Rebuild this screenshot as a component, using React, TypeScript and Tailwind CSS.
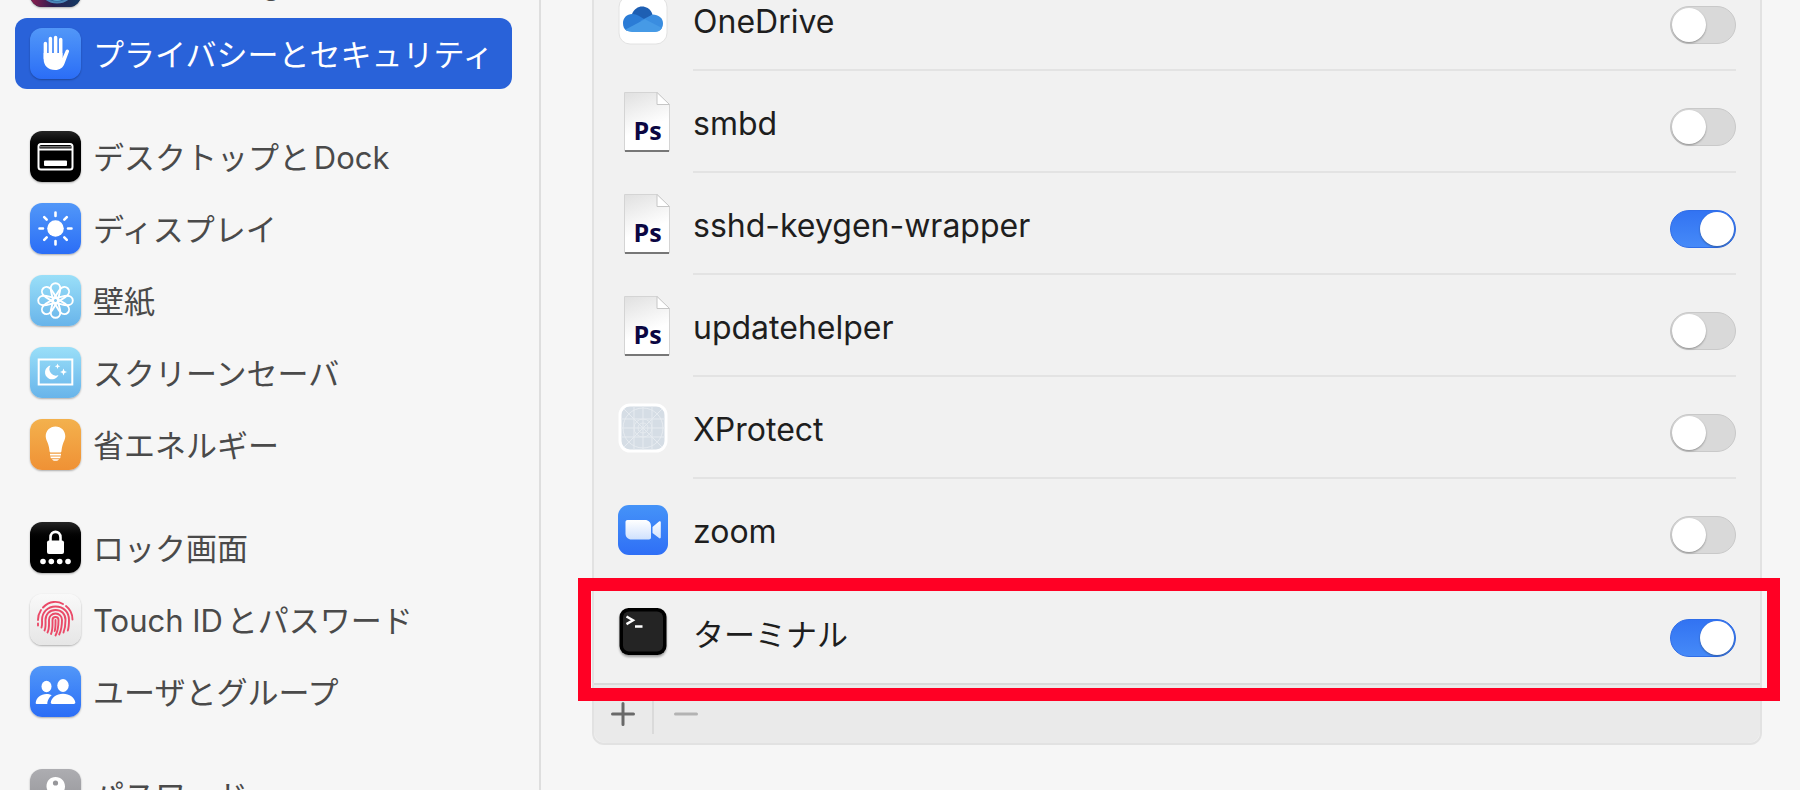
import type { ReactNode } from 'react';

type NavItem = { label: string; tile: string; icon: ReactNode; active?: boolean };
type AppItem = { name: string; on: boolean; icon: ReactNode; textSize?: string; marked?: boolean };

const blue = 'bg-linear-to-b from-[#5297f8] to-[#2b6df6]';
const sky = 'bg-linear-to-b from-[#9adff8] to-[#68b4ea]';
const black = 'bg-linear-to-b from-[#262626] to-black to-40%';

const SiriIcon = () => (
  <svg viewBox="0 0 51 51" className="size-full">
    <defs>
      <linearGradient id="siri" x1="0" x2="1">
        <stop offset="0" stopColor="#8f1d4d" />
        <stop offset=".45" stopColor="#2b1f52" />
        <stop offset="1" stopColor="#123a63" />
      </linearGradient>
    </defs>
    <rect width="51" height="51" rx="12" fill="url(#siri)" />
    <circle cx="27" cy="28" r="18.500" fill="#2d5f95" stroke="#4a86b8" strokeWidth="2" />
    <circle cx="27" cy="33" r="12" fill="#56a8d0" />
  </svg>
);

const HandIcon = () => (
  <svg viewBox="0 0 51 51" className="size-full" fill="none" stroke="#fff" strokeLinecap="round">
    <path d="M15.400 15.500v15M20.400 10.500v16M25.600 9.500v17M30.700 11.500v17" strokeWidth="3.500" />
    <path d="M13.650 25h18.800v5l3.300-7.500c.9-2 4-1 3.200 1.300l-4.400 11.700c-1.500 4.200-4.700 6.500-9.400 6.500-7 0-11.500-4.300-11.500-11z" fill="#fff" stroke="none" />
  </svg>
);

const DockIcon = () => (
  <svg viewBox="0 0 51 51" className="size-full" fill="none">
    <rect x="8.500" y="13" width="34" height="25.500" rx="2.500" stroke="#fff" strokeWidth="2" />
    <path d="M9 18.500h33" stroke="#fff" strokeWidth="1.800" />
    <path d="M10 15.800h31" stroke="#777" strokeWidth="1.500" />
    <rect x="14" y="29.500" width="23" height="5.500" rx="1" fill="#fff" />
  </svg>
);

const SunIcon = () => (
  <svg viewBox="0 0 51 51" className="size-full">
    <circle cx="25.500" cy="25.500" r="8.300" fill="#fff" />
    <path d="M25.500 9.500v3.500M25.500 38v3.500M9.500 25.500H13M38 25.500h3.500M14.200 14.200l2.500 2.500M34.300 34.300l2.500 2.500M14.200 36.800l2.500-2.500M34.300 16.700l2.500-2.500" stroke="#fff" strokeWidth="2.600" strokeLinecap="round" />
  </svg>
);

const FlowerIcon = () => (
  <svg viewBox="0 0 51 51" className="size-full" fill="none" stroke="#fff" strokeWidth="1.900">
    {[0, 45, 90, 135, 180, 225, 270, 315].map((angle) => (
      <path
        key={angle}
        d="M23 27.500c.5-4.500-2.300-9-2.300-14a4.800 5.300 0 0 1 9.600 0c0 5-2.800 9.500-2.300 14"
        transform={`rotate(${angle} 25.500 25.500)`}
      />
    ))}
  </svg>
);

const ScreenSaverIcon = () => (
  <svg viewBox="0 0 51 51" className="size-full" fill="#fff">
    <rect x="8.700" y="12.500" width="33.600" height="25" fill="none" stroke="#fff" strokeWidth="2" />
    <path d="M20.500 18.500a7 7 0 1 0 8 9.500 6.500 6.500 0 0 1-8-9.500z" />
    <path d="M27.500 16.500l.8 2 2 .8-2 .8-.8 2-.8-2-2-.8 2-.8zM33.500 21.500l1 2.500 2.500 1-2.500 1-1 2.500-1-2.500-2.500-1 2.500-1z" />
  </svg>
);

const BulbIcon = () => (
  <svg viewBox="0 0 51 51" className="size-full" fill="#fff">
    <path d="M25.500 7.500c-5.700 0-9.800 4.300-9.800 9.800 0 3 1.500 5 2.400 7.700.9 2.700 1.200 5 1.500 7.500.1.700.5 1 1.100 1h9.600c.6 0 1-.3 1.100-1 .3-2.500.6-4.800 1.500-7.500.9-2.700 2.400-4.700 2.400-7.700 0-5.500-4.100-9.800-9.800-9.800z" />
    <path d="M20 34.700h11v1.800H20zM20.300 37.500h10.400l-.6 1.700h-9.200zM22 40.200h7c-.6 1-1.800 1.500-3.500 1.500S22.600 41.200 22 40.200z" />
  </svg>
);

const LockIcon = () => (
  <svg viewBox="0 0 51 51" className="size-full" fill="#fff">
    <path d="M20.500 20v-4.500c0-7.500 10-7.500 10 0V20" fill="none" stroke="#fff" strokeWidth="2.600" />
    <rect x="17" y="18.500" width="17" height="13.500" rx="2" />
    <circle cx="13" cy="39.500" r="2.800" />
    <circle cx="21.300" cy="39.500" r="2.800" />
    <circle cx="29.700" cy="39.500" r="2.800" />
    <circle cx="38" cy="39.500" r="2.800" />
  </svg>
);

const FingerprintIcon = () => (
  <svg viewBox="0 0 51 51" className="size-full" fill="none" stroke="#ea4a68" strokeWidth="1.900" strokeLinecap="round">
    <path d="M13 13.500C19.500 6.500 28 7 33 10M36 12c4.500 3.500 6.500 8.500 6.500 13.500M8 26c0-4 1-7 3-10M8 29.500v2" />
    <path d="M11.500 33.500c1-2.500.5-5 .5-7.500 0-7.500 5.500-13.500 13.500-13.500S39 18 39 26c0 4 0 7-1.200 10.500" />
    <path d="M14.500 36.500c1.500-3 1-7 1-10.500 0-5.500 4-10 10-10s10 4 10 10c0 4.500-.5 8.500-2 12.500" />
    <path d="M17.500 38.500c2-3.500 1.500-8.500 1.500-12.500 0-3.500 2.800-6.500 6.500-6.500s6.500 3 6.500 6.500c0 5-.7 10-2.800 14.500" />
    <path d="M21 40c2-4.500 1.500-9 1.500-14 0-4 6-4 6 0 0 5 0 10-3 15.500" />
    <path d="M25.500 26c0 4 .2 8-.8 11" />
  </svg>
);

const UsersIcon = () => (
  <svg viewBox="0 0 51 51" className="size-full" fill="#fff">
    <ellipse cx="16.500" cy="20.500" rx="5" ry="5.700" />
    <ellipse cx="33" cy="19.500" rx="5.700" ry="6.400" />
    <path d="M6.500 38c-.6 0-.9-.5-.8-1.200.6-5 5-8.800 10.800-8.800 1.900 0 3.700.5 5.200 1.300-2.400 2-4 4.700-4.400 7.500 0 .5 0 .8.100 1.200z" />
    <path d="M22.500 38c-1.500 0-1.900-.6-1.700-1.700.9-5 5.500-8.600 12.200-8.600s11.500 3.600 12.300 8.600c.1 1.100-.4 1.700-1.700 1.700z" />
  </svg>
);

const KeyIcon = () => (
  <svg viewBox="0 0 51 51" className="size-full">
    <path d="M25.500 8c5.500 0 9.500 4 9.500 9.500 0 4-2.300 7-5.500 8.500v3l3 3-3 3 3 3-5 5-4-4V26c-4-1.500-7-4.500-7-8.500C16.500 12 20 8 25.500 8z" fill="#fff" />
    <circle cx="25.500" cy="14" r="2.600" fill="#97979b" />
  </svg>
);

const OneDriveIcon = () => (
  <svg viewBox="0 0 50 50" className="size-[50px]">
    <rect x="1" y="1" width="48" height="48" rx="11" fill="#fff" stroke="#e2e2e2" />
    <path d="M14 19c2.500-6 8-8.500 13-7 4 1 6.500 4 7.500 7.500L26 27z" fill="#1e5fb3" />
    <path d="M5 28c0-5.500 4.500-9.500 10-9 4 .2 7 2.500 12 5.500L9 36c-3-1.500-4-4.500-4-8z" fill="#2b7cd6" />
    <path d="M22 26l12.500-6.500c6 0 10.500 3.500 10.500 9 0 4.500-3 8-8 8z" fill="#3a8de0" />
    <path d="M7.500 34.500L27 24.200l17 8.800c-1.500 2.500-4 4-7 4H14c-3 0-5-1-6.500-2.500z" fill="#469ae6" />
  </svg>
);

const PsFileIcon = () => (
  <svg viewBox="0 0 46 60" className="ml-1.5 h-15 w-[46px]">
    <defs>
      <linearGradient id="paper" x1="0" y1="0" x2=".3" y2="1">
        <stop offset="0" stopColor="#e0e0e0" />
        <stop offset=".7" stopColor="#fff" />
      </linearGradient>
    </defs>
    <path d="M.5.5H33L45.500 13v46H.5z" fill="url(#paper)" stroke="#d4d4d4" />
    <path d="M33 .5V12.500H45.500z" fill="#fff" stroke="#c6c6c6" />
    <path d="M1 59h44" stroke="#777" strokeWidth="2" />
    <text x="23.500" y="48" textAnchor="middle" fill="#0b0642" fontSize="25" fontWeight="700" fontFamily="Open Sans, sans-serif">Ps</text>
  </svg>
);

const XProtectIcon = () => (
  <svg viewBox="0 0 50 50" className="size-[50px]" fill="none">
    <rect x="2" y="2" width="46" height="46" rx="10" fill="#d5dde5" stroke="#fff" strokeWidth="3" />
    <g stroke="#e6ebf0" strokeWidth="1">
      <path d="M25 3v44M3 25h44M16 3v44M34 3v44M3 16h44M3 34h44M6 6l38 38M44 6L6 44" />
      <circle cx="25" cy="25" r="20" />
      <circle cx="25" cy="25" r="9" />
      <circle cx="25" cy="25" r="5" />
    </g>
  </svg>
);

const ZoomIcon = () => (
  <svg viewBox="0 0 50 50" className="size-[50px]">
    <defs>
      <linearGradient id="zoom" x2="0" y2="1">
        <stop offset="0" stopColor="#4593f8" />
        <stop offset="1" stopColor="#2f6ff6" />
      </linearGradient>
      <linearGradient id="camera" x2="0" y2="1">
        <stop offset="0" stopColor="#fff" />
        <stop offset="1" stopColor="#cfe1fd" />
      </linearGradient>
    </defs>
    <rect width="50" height="50" rx="11" fill="url(#zoom)" />
    <path d="M7.500 17c0-1.200.8-2 2-2H27c3.500 0 6 2.500 6 6v11.500c0 1.200-.8 2-2 2H13.500c-3.500 0-6-2.500-6-6zM34.500 22l6.500-5.500c.8-.7 1.800-.3 1.800.8v15c0 1.100-1 1.500-1.800.8L34.500 28z" fill="url(#camera)" />
  </svg>
);

const TerminalIcon = () => (
  <svg viewBox="0 0 50 50" className="size-[50px] drop-shadow-[0_2px_1px_rgba(0,0,0,0.35)]">
    <rect x="1.500" y="1" width="47" height="47" rx="9" fill="#000" />
    <rect x="5" y="4.500" width="40" height="40" rx="6" fill="#242424" />
    <path d="M8.500 9.500l6.500 3.800-6.500 3.800M17 19.500h7.500" fill="none" stroke="#fff" strokeWidth="2.400" />
  </svg>
);

const groups: NavItem[][] = [
  [
    { label: 'SiriとSpotlight', tile: 'bg-[#1b2347]', icon: <SiriIcon /> },
    { label: 'プライバシーとセキュリティ', tile: blue, icon: <HandIcon />, active: true },
  ],
  [
    { label: 'デスクトップとDock', tile: black, icon: <DockIcon /> },
    { label: 'ディスプレイ', tile: blue, icon: <SunIcon /> },
    { label: '壁紙', tile: sky, icon: <FlowerIcon /> },
    { label: 'スクリーンセーバ', tile: sky, icon: <ScreenSaverIcon /> },
    { label: '省エネルギー', tile: 'bg-linear-to-b from-[#f3b14d] to-[#ef9135]', icon: <BulbIcon /> },
  ],
  [
    { label: 'ロック画面', tile: black, icon: <LockIcon /> },
    { label: 'Touch IDとパスワード', tile: 'bg-linear-to-b from-[#f9f9f9] to-[#e6e6e6]', icon: <FingerprintIcon /> },
    { label: 'ユーザとグループ', tile: blue, icon: <UsersIcon /> },
  ],
  [{ label: 'パスワード', tile: 'bg-linear-to-b from-[#adadb1] to-[#8e8e92]', icon: <KeyIcon /> }],
];

const apps: AppItem[] = [
  { name: 'OneDrive', on: false, icon: <OneDriveIcon /> },
  { name: 'smbd', on: false, icon: <PsFileIcon /> },
  { name: 'sshd-keygen-wrapper', on: true, icon: <PsFileIcon /> },
  { name: 'updatehelper', on: false, icon: <PsFileIcon /> },
  { name: 'XProtect', on: false, icon: <XProtectIcon /> },
  { name: 'zoom', on: false, icon: <ZoomIcon /> },
  { name: 'ターミナル', on: true, icon: <TerminalIcon />, textSize: 'text-[31px]', marked: true },
];

function Sidebar() {
  return (
    <nav className="w-[541px] shrink-0 overflow-hidden border-r-2 border-[#dedede] pr-[27px] pl-[15px]">
      <div className="-mt-[54px] flex flex-col gap-8">
        {groups.map((items, i) => (
          <ul key={i} className="flex flex-col gap-px">
            {items.map((item) => (
              <li key={item.label}>
                <a
                  href="#"
                  className={`flex h-[71px] items-center gap-3 rounded-xl pl-[15px] text-[31px] whitespace-nowrap ${
                    item.active ? 'bg-[#2962d9] text-white' : 'text-[#4a4a4a]'
                  }`}
                >
                  <span className={`size-[51px] shrink-0 overflow-hidden rounded-xl shadow-[0_1px_2px_rgba(0,0,0,0.3)] ${item.tile}`}>
                    {item.icon}
                  </span>
                  <span className="pt-1 [text-autospace:normal]">{item.label}</span>
                </a>
              </li>
            ))}
          </ul>
        ))}
      </div>
    </nav>
  );
}

function Switch({ id, on }: { id: string; on: boolean }) {
  return (
    <input
      id={id}
      type="checkbox"
      role="switch"
      defaultChecked={on}
      className="mt-3 h-[38px] w-[66px] shrink-0 appearance-none rounded-full border border-[#c9c9c9] bg-[#d9d9d9] px-px py-px before:block before:size-[34px] before:rounded-full before:bg-white before:shadow-[0_1px_2px_rgba(0,0,0,0.35)] checked:border-[#2f6de8] checked:bg-linear-to-b checked:from-[#3273f2] checked:to-[#468af8] checked:before:ml-7"
    />
  );
}

function AppRow({ app, last }: { app: AppItem; last: boolean }) {
  const id = `allow-${app.name}`;
  return (
    <li className="relative flex h-[102px] pl-6">
      <div className="flex w-[75px] shrink-0 items-center">{app.icon}</div>
      <div className={`mr-6 flex grow items-center justify-between border-[#e3e3e3] ${last ? '' : 'border-b-2'}`}>
        <label htmlFor={id} className={`pt-1.5 text-[#1e1e1e] ${app.textSize ?? 'text-[32px]'}`}>
          {app.name}
        </label>
        <Switch id={id} on={app.on} />
      </div>
      {app.marked && <div className="pointer-events-none absolute -top-[3px] -right-5 -bottom-[18px] -left-4 border-[13px] border-[#ff0024]" />}
    </li>
  );
}

export default function App() {
  return (
    <div className="flex h-screen overflow-hidden bg-[#f6f6f6] font-[Inter,'Noto_Sans_CJK_JP',sans-serif]">
      <Sidebar />
      <main className="grow pr-[38px] pl-[51px]">
        <section className="-mt-[33px] rounded-xl border-2 border-[#e2e2e2] bg-[#f1f1f1]">
          <ul>
            {apps.map((app, i) => (
              <AppRow key={app.name} app={app} last={i === apps.length - 1} />
            ))}
          </ul>
          <div className="flex h-[60px] items-center rounded-b-xl border-t-2 border-[#d9d9d9] bg-[#eaeaea]">
            <button type="button" aria-label="追加" className="flex h-10 w-[60px] items-center justify-center border-r-2 border-[#dadada]">
              <svg viewBox="0 0 24 24" className="size-6">
                <path d="M12 1.500v21M1.500 12h21" stroke="#696969" strokeWidth="3" strokeLinecap="round" />
              </svg>
            </button>
            <button type="button" aria-label="削除" className="flex h-10 w-16 items-center justify-center">
              <svg viewBox="0 0 24 24" className="size-6">
                <path d="M1.500 12h21" stroke="#b3b3b3" strokeWidth="3" strokeLinecap="round" />
              </svg>
            </button>
          </div>
        </section>
      </main>
    </div>
  );
}
